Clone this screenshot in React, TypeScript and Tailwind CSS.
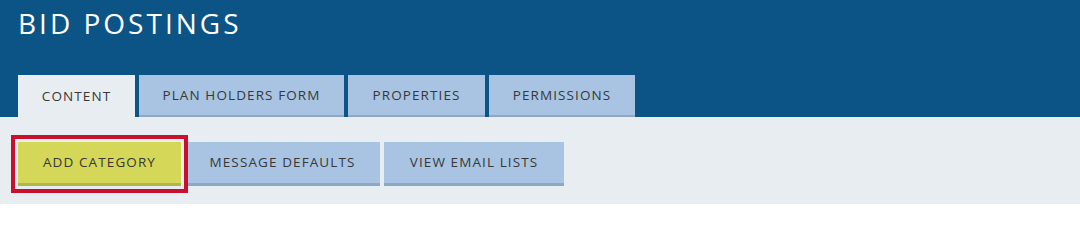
const tabs = ["CONTENT", "PLAN HOLDERS FORM", "PROPERTIES", "PERMISSIONS"];

export default function App() {
  return (
    <div className="h-[204px] w-[1080px] bg-[#e8edf1] font-['Open_Sans',sans-serif]">
      {/* page header with tabs */}
      <div className="flex h-[117px] flex-col justify-between bg-[#0c5486] px-[18px]">
        <h1 className="pt-[3px] text-[28px] font-normal leading-[40px] tracking-[3px] text-white">
          BID POSTINGS
        </h1>
        <div className="flex gap-[4px]">
          {tabs.map((t, i) =>
            i === 0 ? (
              <div
                key={t}
                className="flex h-[42px] w-[117px] items-center justify-center bg-[#e8edf1] text-[13.5px] tracking-[1.1px] text-[#383838]"
              >
                {t}
              </div>
            ) : (
              <div
                key={t}
                className={`flex h-[42px] items-center justify-center border-b-2 border-[#8ea7c2] bg-[#a8c4e2] text-[13.5px] tracking-[1.1px] text-[#383838] ${
                  i === 1 ? "w-[205px]" : i === 2 ? "w-[137px]" : "w-[146px]"
                }`}
              >
                {t}
              </div>
            )
          )}
        </div>
      </div>

      {/* action buttons */}
      <div className="flex gap-[4px] px-[18px] pt-[25px]">
        <button className="relative z-10 h-[44px] w-[163px] border-b-[3px] border-[#b3b54a] bg-[#d4d757] text-[13.5px] tracking-[1.1px] text-[#383838] outline-4 outline-offset-[3px] outline-[#c8102e]">
          ADD CATEGORY
        </button>
        <button className="h-[44px] w-[195px] border-b-[3px] border-[#8ea7c2] bg-[#a8c4e2] text-[13.5px] tracking-[1.1px] text-[#383838]">
          MESSAGE DEFAULTS
        </button>
        <button className="h-[44px] w-[180px] border-b-[3px] border-[#8ea7c2] bg-[#a8c4e2] text-[13.5px] tracking-[1.1px] text-[#383838]">
          VIEW EMAIL LISTS
        </button>
      </div>
    </div>
  );
}
